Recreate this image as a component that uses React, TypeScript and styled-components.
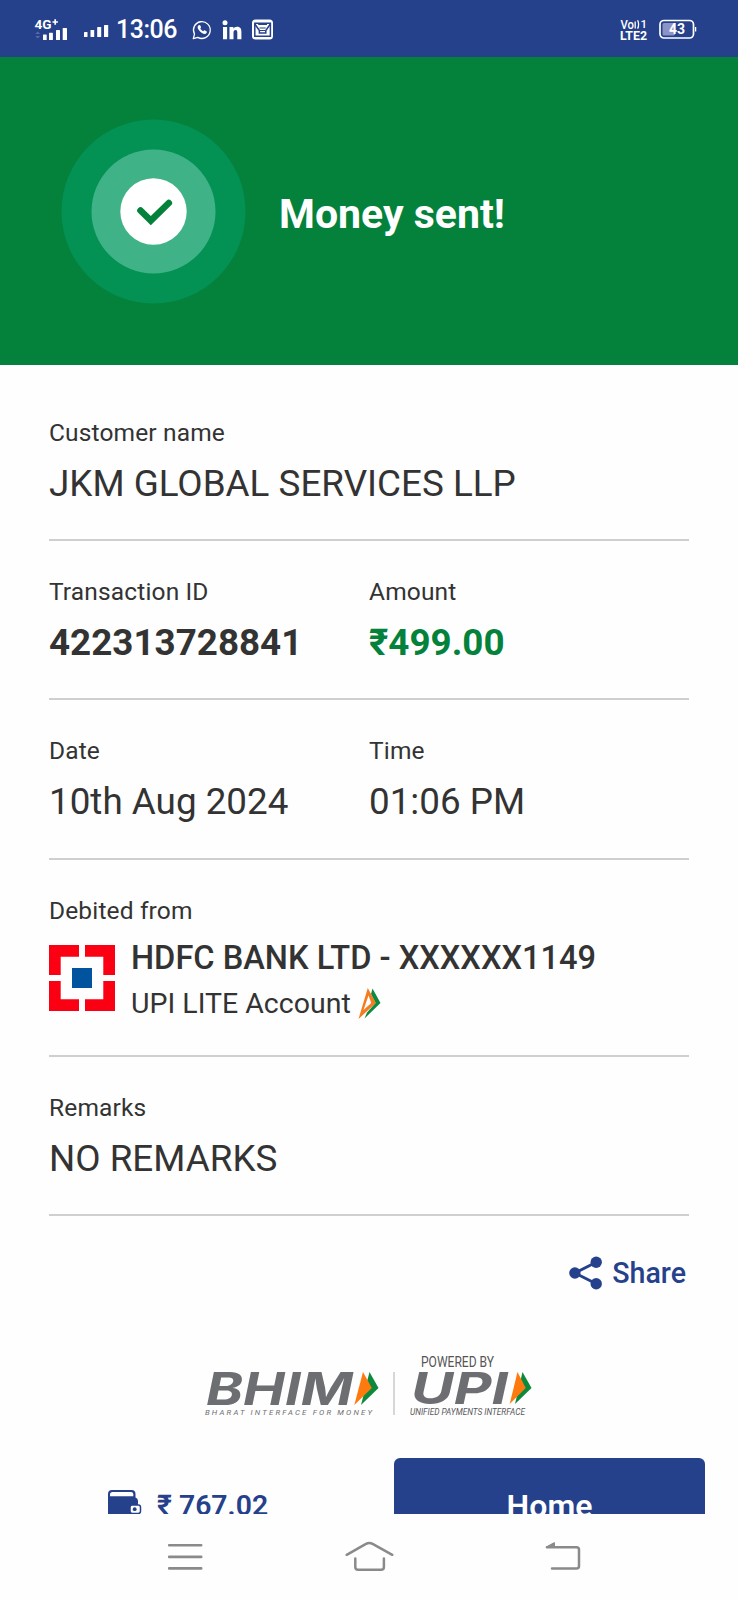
import React from "react";
import styled, { createGlobalStyle } from "styled-components";

const GlobalStyle = createGlobalStyle`
  * { box-sizing: border-box; }
  body { margin: 0; background: #fff; font-family: Roboto, "Liberation Sans", sans-serif; color: #333; }
  svg { display: block; flex: none; overflow: visible; }
`;

const Screen = styled.main`
  width: 738px;
  height: 1600px;
  display: flex;
  flex-direction: column;
  overflow: hidden;
  background: #fefefe;
`;

const Viewport = styled.div`
  height: 1514px;
  flex: none;
  overflow: hidden;
`;

const StatusBar = styled.header`
  height: 57px;
  background: #26418c;
  color: #fff;
  display: flex;
  justify-content: space-between;
  align-items: center;
  padding: 2px 41px 0 34px;
`;

const StatusGroup = styled.div<{ $gap: number }>`
  display: flex;
  align-items: center;
  gap: ${(p) => p.$gap}px;
`;

const Clock = styled.span`
  font-size: 25px;
  line-height: 30px;
  font-weight: 500;
  letter-spacing: -0.5px;
  margin: 1px 0 0 -9px;
`;

const Banner = styled.section`
  height: 308px;
  background: #04823c;
  display: flex;
  align-items: center;
  gap: 33px;
  padding: 0 0 0 61px;
`;

const BannerTitle = styled.h1`
  margin: 5px 0 0;
  color: #fff;
  font-size: 41px;
  line-height: 48px;
  font-weight: 700;
`;

const Details = styled.section`
  padding: 16px 49px 0;
`;

const Row = styled.div<{ $height?: number }>`
  height: ${(p) => p.$height ?? 159.4}px;
  display: grid;
  grid-template-columns: 1fr 1fr;
  align-content: start;
  padding-top: 37px;
  border-bottom: 2px solid #cfcfcf;

  &:first-child {
    height: 160px;
    padding-top: 38px;
  }
`;

const Field = styled.div<{ $wide?: boolean }>`
  grid-column: ${(p) => (p.$wide ? "span 2" : "auto")};
  white-space: nowrap;
`;

const Label = styled.div`
  font-size: 24.5px;
  line-height: 28px;
  letter-spacing: 0.15px;
`;

const Value = styled.div<{ $bold?: boolean; $green?: boolean }>`
  margin-top: 16px;
  font-size: 36.8px;
  line-height: 42px;
  font-weight: ${(p) => (p.$bold ? 700 : 400)};
  color: ${(p) => (p.$green ? "#04823c" : "inherit")};
`;

const Account = styled.div`
  display: flex;
  align-items: flex-start;
  gap: 16px;
  margin-top: 20px;
`;

const AccountText = styled.div`
  margin-top: -7px;
`;

const BankName = styled.div`
  font-size: 32.6px;
  line-height: 40px;
  font-weight: 500;
`;

const AccountType = styled.div`
  display: flex;
  align-items: center;
  gap: 7px;
  font-size: 28.5px;
  line-height: 34px;
  margin-top: 9px;
`;

const ShareButton = styled.button`
  border: 0;
  padding: 0;
  background: none;
  display: flex;
  align-items: center;
  gap: 10px;
  margin: 39px 3px 0 auto;
  font: 500 28.6px/34px Roboto, sans-serif;
  color: #26418c;
`;

const ShareLabel = styled.span`
  padding-top: 1px;
`;

const Partners = styled.div`
  display: flex;
  justify-content: center;
  height: 68px;
  margin-top: 61px;
`;

const Actions = styled.footer`
  display: flex;
  padding: 0 33px 0 108px;
  justify-content: space-between;
  margin-top: 39px;
`;

const Balance = styled.div`
  display: flex;
  align-items: flex-start;
  gap: 15px;
  padding-top: 32px;
  color: #26418c;
  font-size: 28.4px;
  line-height: 32px;
  font-weight: 600;
`;

const HomeButton = styled.button`
  width: 311px;
  height: 90px;
  border: 0;
  border-radius: 6px;
  padding: 5px 0 0;
  background: #26418c;
  color: #fff;
  font: 600 32px/36px Roboto, sans-serif;
`;

const NavBar = styled.nav`
  height: 86px;
  display: grid;
  grid-template-columns: 177px 200px 36px;
  align-content: start;
  padding: 26px 0 0 167px;
`;

const SignalBars = () => (
  <svg width="25" height="13" viewBox="0 0 25 13" fill="#fff">
    <rect x="0" y="9" width="3.5" height="5" rx="0.6" />
    <rect x="6.5" y="7" width="3.7" height="7" rx="0.6" />
    <rect x="13.2" y="4" width="4" height="10" rx="0.6" />
    <rect x="20" y="2" width="4.2" height="12" rx="0.6" />
  </svg>
);

const NetworkIcon = () => (
  <svg width="35" height="24" viewBox="0 0 35 24" fill="#fff">
    <text x="0.5" y="10.800" fontFamily="Roboto" fontWeight="700" fontSize="13.5" textLength="17" lengthAdjust="spacingAndGlyphs">4G</text>
    <path d="M18.500 4h5.400M21.200 1.300v5.400" stroke="#fff" strokeWidth="1.7" />
    <path d="M1.200 16l2.500-2.600L6.200 16zM1.200 18l2.500 2.600L6.200 18z" fill="#5769a8" />
    <rect x="9" y="16.5" width="3.7" height="5.5" rx="0.6" />
    <rect x="15" y="14.8" width="3.9" height="7.2" rx="0.6" />
    <rect x="22" y="12" width="4" height="10" rx="0.6" />
    <rect x="28.700" y="10" width="4.300" height="12" rx="0.6" />
  </svg>
);

const WhatsAppIcon = () => (
  <svg width="20" height="20" viewBox="0 0 20 20" fill="none" stroke="#fff">
    <path d="M1.300 18.700l1.200-4.600A8.400 8.400 0 1 1 5.800 17.400z" strokeWidth="1.3" strokeLinejoin="round" />
    <path d="M6.300 5.500c-1.800 2 .5 5.200 3.300 7.200 2 1.400 4.100 1.700 4.900.2.700-1.200.3-1.500-.6-2l-1.100-.6c-.6-.3-.8 0-1.500.9-1.400-.6-2.400-1.600-3-2.800.8-.8.9-1 .6-1.600L8.300 5.600c-.4-1-1.400-.8-2-.1z" fill="#fff" stroke="none" />
  </svg>
);

const LinkedInIcon = () => (
  <svg width="20" height="20" viewBox="0 0 20 20" fill="#fff">
    <circle cx="3" cy="2.8" r="2.5" />
    <path d="M1 7h4.100v12.200H1zM7.500 7h3.900v1.700C12 7.600 13.300 6.700 15 6.700c3.700 0 4.400 2.400 4.400 5.400v7.100h-4.100v-6.400c0-1.500-.1-2.900-1.800-2.900s-2 1.400-2 2.900v6.400h-4z" />
  </svg>
);

const MailIcon = () => (
  <svg width="22" height="21" viewBox="0 0 22 21" fill="none" stroke="#26418c" strokeWidth="1.5">
    <rect x="0" y="0.5" width="21" height="20" rx="3.5" fill="#fff" stroke="none" />
    <path d="M2.800 4.200h15.600v13H2.800z" />
    <path d="M2.800 5l4.600 6.500v2.500h6.400v-2.500L18.400 5M6.200 5.300h8.800" />
    <path d="M7.500 9h6.200M8 11.500h5" strokeWidth="1.200" />
  </svg>
);

const VolteIcon = () => (
  <svg width="28" height="22" viewBox="0 0 28 22" fill="#fff" fontFamily="Roboto">
    <text x="0.5" y="9.800" fontSize="12" fontWeight="500" textLength="13.5" lengthAdjust="spacingAndGlyphs">Vo</text>
    <path d="M15.200 2.500v7M17.600 1.200c1.200 2.400 1.200 6 0 8.400" stroke="#fff" strokeWidth="1.3" fill="none" />
    <text x="20.500" y="9.300" fontSize="11.5" fontWeight="500">1</text>
    <text x="0" y="20.500" fontSize="12" fontWeight="700" textLength="27" lengthAdjust="spacingAndGlyphs">LTE2</text>
  </svg>
);

const BatteryIcon = () => (
  <svg width="38" height="21" viewBox="0 0 38 21">
    <rect x="1" y="1.5" width="33.500" height="17.500" rx="4" fill="none" stroke="#fff" strokeWidth="1.7" />
    <rect x="3.500" y="4" width="12.500" height="12.500" rx="1.5" fill="#8c93c6" />
    <path d="M36.600 8v4.500" stroke="#fff" strokeWidth="1.3" />
    <text x="18" y="15.300" textAnchor="middle" fontFamily="Roboto" fontWeight="700" fontSize="14" fill="#fff">43</text>
  </svg>
);

const SuccessBadge = () => (
  <svg width="185" height="185" viewBox="0 0 185 185">
    <circle cx="92.500" cy="92.500" r="92" fill="#039154" />
    <circle cx="92.500" cy="92.500" r="62" fill="#3fb387" />
    <circle cx="92.500" cy="92.500" r="33.200" fill="#fff" />
    <path d="M79.500 91.500l10.300 10.200 18-17.700" fill="none" stroke="#04823c" strokeWidth="6.6" strokeLinecap="round" />
  </svg>
);

const HdfcLogo = () => (
  <svg width="66" height="66" viewBox="0 0 66 66" fill="#fb0012">
    <path d="M0 0h30v11.700H11.700V30H0zM36 0h30v30H54.300V11.700H36zM0 36h11.700v18.300H30V66H0zM54.300 36H66v30H36V54.300h18.300z" />
    <rect x="23" y="23" width="20" height="20" fill="#00539c" />
  </svg>
);

const UpiLiteMark = () => (
  <svg width="24" height="32" viewBox="0 0 24 32">
    <path d="M14.500 0.500L22.500 15 6.500 30.500 9 24.500 17.500 15 13 6z" fill="#0e8a40" />
    <path d="M9.800 0L17.800 15 0.500 31zM10.500 7.500L5.500 22 13.300 15z" fill="#f47b20" fillRule="evenodd" />
  </svg>
);

const ShareIcon = () => (
  <svg width="34" height="34" viewBox="0 0 34 34" fill="#26418c">
    <path d="M28.200 6.200L6.900 17l21.300 10.800" fill="none" stroke="#26418c" strokeWidth="2.9" />
    <circle cx="6.900" cy="17" r="5.7" />
    <circle cx="28.200" cy="6.200" r="5.700" />
    <circle cx="28.200" cy="27.800" r="5.700" />
  </svg>
);

const PartnerLogos = () => (
  <svg width="330" height="68" viewBox="204 1350 330 68" fontFamily="Roboto" fill="#6d6e71">
    <text x="206" y="1404" fontFamily="Inter" fontSize="45" fontWeight="700" fontStyle="italic" textLength="147" lengthAdjust="spacingAndGlyphs">BHIM</text>
    <path d="M369.500 1371l9 16-17.500 17z" fill="#0b8a3d" />
    <path d="M363 1371l8.800 16-17.500 17z" fill="#fe7a0e" />
    <text x="205" y="1413.700" fontSize="7.800" fontStyle="italic" textLength="167">BHARAT INTERFACE FOR MONEY</text>
    <path d="M394 1371v43" stroke="#bdbdbd" strokeWidth="1.2" />
    <text x="421" y="1365.500" fontSize="14" textLength="73" lengthAdjust="spacingAndGlyphs" fill="#555">POWERED BY</text>
    <text x="411" y="1403" fontFamily="Inter" fontSize="43.500" fontWeight="700" fontStyle="italic" textLength="97" lengthAdjust="spacingAndGlyphs">UPI</text>
    <path d="M522.500 1371l9 16-16.500 16z" fill="#0b8a3d" />
    <path d="M517.500 1371l8.200 16-16 16z" fill="#fe7a0e" />
    <text x="410" y="1413.700" fontSize="8.500" fontStyle="italic" textLength="115" lengthAdjust="spacingAndGlyphs" fill="#58595b">UNIFIED PAYMENTS INTERFACE</text>
  </svg>
);

const WalletIcon = () => (
  <svg width="34" height="30" viewBox="0 0 34 30">
    <path d="M0 4a4 4 0 0 1 4-4h19.500a4 4 0 0 1 4 4v3.500a3.500 3.500 0 0 1 2.500 3.300V27a3 3 0 0 1-3 3H3a3 3 0 0 1-3-3z" fill="#26418c" />
    <path d="M2 6.300V4.600C2 3 3 2 4.500 2h18.500c1.500 0 2.300 1 2.300 2.500v1.800z" fill="#fefefe" />
    <rect x="22" y="15" width="10.500" height="8.500" rx="2.200" fill="#fefefe" stroke="#26418c" strokeWidth="1.5" />
    <circle cx="26.700" cy="19.200" r="1.900" fill="#26418c" />
  </svg>
);

const MenuIcon = () => (
  <svg width="36" height="32" viewBox="0 0 36 32" stroke="#8a8a8a" strokeWidth="2.6" strokeLinecap="round">
    <path d="M2.200 5.300h32M2.200 16.900h32M2.200 28.400h32" />
  </svg>
);

const HomeIcon = () => (
  <svg width="50" height="32" viewBox="0 0 50 32" fill="none" stroke="#8a8a8a" strokeWidth="2.5" strokeLinecap="round" strokeLinejoin="round">
    <path d="M2.700 14.800L22 3.900q3.300-2 6.600 0L48.300 14.800M11.300 18.500v8.500q0 2.800 2.800 2.800h23q2.800 0 2.800-2.800v-8.500" />
  </svg>
);

const BackIcon = () => (
  <svg width="36" height="32" viewBox="0 0 36 32" fill="none" stroke="#8a8a8a" strokeWidth="2.5" strokeLinecap="round" strokeLinejoin="round">
    <path d="M3 7.200h29.500q2.500 0 2.500 2.500v16.200q0 2.500-2.500 2.500H8" />
    <path d="M2.500 7.200l7.800-4.300v4.300z" fill="#8a8a8a" strokeWidth="1.4" />
  </svg>
);

export default function App() {
  return (
    <Screen>
      <GlobalStyle />
      <Viewport>
        <StatusBar>
          <StatusGroup $gap={15}>
            <NetworkIcon />
            <StatusGroup $gap={16}>
              <SignalBars />
              <Clock>13:06</Clock>
            </StatusGroup>
            <StatusGroup $gap={10}>
              <WhatsAppIcon />
              <LinkedInIcon />
              <MailIcon />
            </StatusGroup>
          </StatusGroup>
          <StatusGroup $gap={11}>
            <VolteIcon />
            <BatteryIcon />
          </StatusGroup>
        </StatusBar>
        <Banner>
          <SuccessBadge />
          <BannerTitle>Money sent!</BannerTitle>
        </Banner>
        <Details>
          <Row>
            <Field $wide>
              <Label>Customer name</Label>
              <Value>JKM GLOBAL SERVICES LLP</Value>
            </Field>
          </Row>
          <Row>
            <Field>
              <Label>Transaction ID</Label>
              <Value $bold>422313728841</Value>
            </Field>
            <Field>
              <Label>Amount</Label>
              <Value $bold $green>₹499.00</Value>
            </Field>
          </Row>
          <Row>
            <Field>
              <Label>Date</Label>
              <Value>10th Aug 2024</Value>
            </Field>
            <Field>
              <Label>Time</Label>
              <Value>01:06 PM</Value>
            </Field>
          </Row>
          <Row $height={197}>
            <Field $wide>
              <Label>Debited from</Label>
              <Account>
                <HdfcLogo />
                <AccountText>
                  <BankName>HDFC BANK LTD - XXXXXX1149</BankName>
                  <AccountType>
                    UPI LITE Account <UpiLiteMark />
                  </AccountType>
                </AccountText>
              </Account>
            </Field>
          </Row>
          <Row>
            <Field $wide>
              <Label>Remarks</Label>
              <Value>NO REMARKS</Value>
            </Field>
          </Row>
          <ShareButton>
            <ShareIcon />
            <ShareLabel>Share</ShareLabel>
          </ShareButton>
        </Details>
        <Partners>
          <PartnerLogos />
        </Partners>
        <Actions>
          <Balance>
            <WalletIcon />
            <span>₹ 767.02</span>
          </Balance>
          <HomeButton>Home</HomeButton>
        </Actions>
      </Viewport>
      <NavBar>
        <MenuIcon />
        <HomeIcon />
        <BackIcon />
      </NavBar>
    </Screen>
  );
}
